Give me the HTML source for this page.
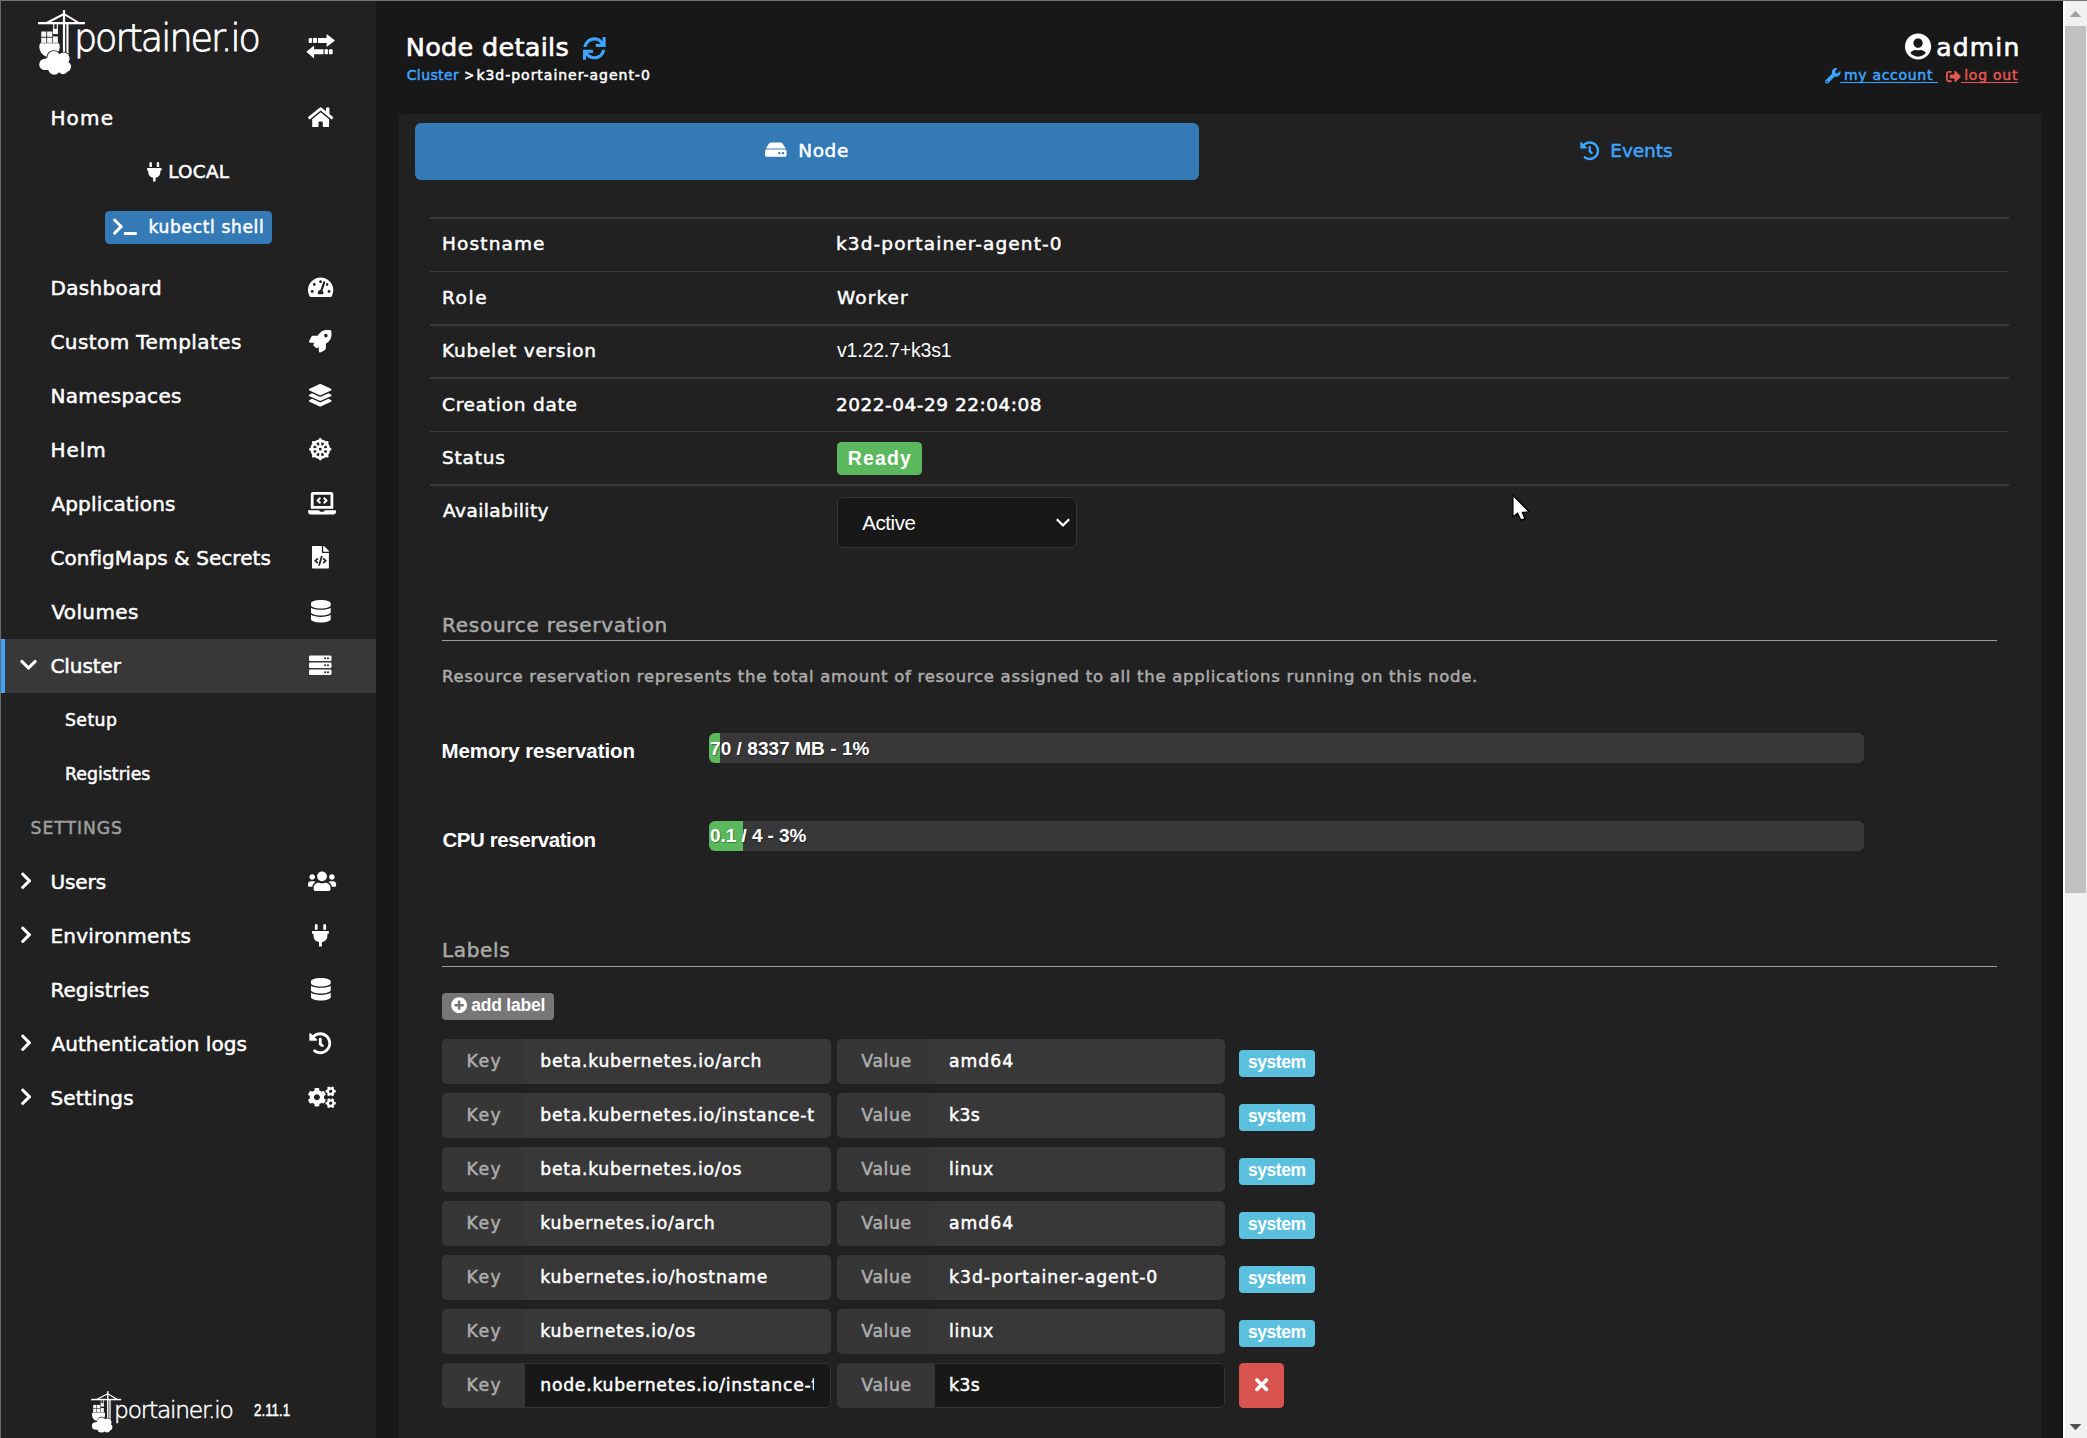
<!DOCTYPE html>
<html lang="en"><head><meta charset="utf-8"><title>Portainer - Node details</title>
<style>
html,body{margin:0;padding:0}
body{width:2087px;height:1438px;overflow:hidden;background:#181818;position:relative;font-family:"DejaVu Sans","Liberation Sans",sans-serif;-webkit-font-smoothing:antialiased}
svg{display:block;overflow:visible}
</style></head>
<body>
<div style="position:absolute;left:0px;top:0px;width:2087px;height:1438px;background:#181818;"></div>
<div style="position:absolute;left:1px;top:1px;width:375px;height:1437px;background:#212121;"></div>
<svg style="position:absolute;left:0;top:0" width="2087" height="1438" viewBox="0 0 2087 1438"><g transform="translate(0 0) scale(1)" fill="#fff" stroke="none"><rect x="62.9" y="10" width="2.2" height="42.5"/><rect x="66.4" y="23" width="2.1" height="31.5"/><rect x="38.1" y="22" width="46.8" height="2.3"/><path d="M64 14 L46.6 23 M64 14 L79 23" stroke="#fff" stroke-width="2" fill="none"/><rect x="53.1" y="24" width="1.1" height="5"/><rect x="56.8" y="24" width="1.1" height="5"/><rect x="52.9" y="28.8" width="5" height="5.3"/><g fill="#f4f4f4"><rect x="41.2" y="31.5" width="5.1" height="5.3"/><rect x="47.1" y="31.5" width="5.2" height="5.3"/><rect x="41.2" y="37.7" width="5.1" height="5.2"/><rect x="47.1" y="37.7" width="5.2" height="5.2"/><rect x="52.9" y="36.4" width="5" height="6.5"/></g><path d="M40.05 43.2 H59.05 A10.2 10.2 0 1 1 40.05 43.2 Z" /><g stroke="#212121" stroke-width="1.6"><circle cx="53.9" cy="57.6" r="6.6"/><circle cx="63.6" cy="58.6" r="6"/><circle cx="45" cy="64.4" r="5.7"/><circle cx="65.9" cy="66.6" r="5.2"/><circle cx="54.2" cy="68.8" r="6"/><circle cx="63" cy="69.4" r="4.8"/></g><circle cx="53.9" cy="57.6" r="6.6"/><circle cx="63.6" cy="58.6" r="6"/><circle cx="45" cy="64.4" r="5.7"/><circle cx="65.9" cy="66.6" r="5.2"/><circle cx="54.2" cy="68.8" r="6"/><circle cx="63" cy="69.4" r="4.8"/><rect x="46" y="58" width="20" height="12"/><text x="73.9" y="51.4" font-family="DejaVu Sans, Liberation Sans, sans-serif" font-weight="200" font-size="36.5" stroke="#fff" stroke-width="0.8" textLength="187" lengthAdjust="spacing">portainer.io</text></g></svg>
<svg style="position:absolute;left:0;top:0" width="2087" height="1438" viewBox="0 0 2087 1438"><g transform="translate(66.816 1384.736) scale(0.64)" fill="#fff" stroke="none"><rect x="62.9" y="10" width="2.2" height="42.5"/><rect x="66.4" y="23" width="2.1" height="31.5"/><rect x="38.1" y="22" width="46.8" height="2.3"/><path d="M64 14 L46.6 23 M64 14 L79 23" stroke="#fff" stroke-width="2" fill="none"/><rect x="53.1" y="24" width="1.1" height="5"/><rect x="56.8" y="24" width="1.1" height="5"/><rect x="52.9" y="28.8" width="5" height="5.3"/><g fill="#f4f4f4"><rect x="41.2" y="31.5" width="5.1" height="5.3"/><rect x="47.1" y="31.5" width="5.2" height="5.3"/><rect x="41.2" y="37.7" width="5.1" height="5.2"/><rect x="47.1" y="37.7" width="5.2" height="5.2"/><rect x="52.9" y="36.4" width="5" height="6.5"/></g><path d="M40.05 43.2 H59.05 A10.2 10.2 0 1 1 40.05 43.2 Z" /><g stroke="#212121" stroke-width="1.6"><circle cx="53.9" cy="57.6" r="6.6"/><circle cx="63.6" cy="58.6" r="6"/><circle cx="45" cy="64.4" r="5.7"/><circle cx="65.9" cy="66.6" r="5.2"/><circle cx="54.2" cy="68.8" r="6"/><circle cx="63" cy="69.4" r="4.8"/></g><circle cx="53.9" cy="57.6" r="6.6"/><circle cx="63.6" cy="58.6" r="6"/><circle cx="45" cy="64.4" r="5.7"/><circle cx="65.9" cy="66.6" r="5.2"/><circle cx="54.2" cy="68.8" r="6"/><circle cx="63" cy="69.4" r="4.8"/><rect x="46" y="58" width="20" height="12"/><text x="73.9" y="51.4" font-family="DejaVu Sans, Liberation Sans, sans-serif" font-weight="200" font-size="36.5" stroke="#fff" stroke-width="0.8" textLength="187" lengthAdjust="spacing">portainer.io</text></g></svg>
<svg style="position:absolute;left:300px;top:28px" width="42" height="36" viewBox="300 28 42 36" fill="#fff"><path d="M326.6 33.9 L335 40.45 L326.6 46.9 V42.9 H317.9 V37.9 H326.6 Z"/><rect x="312.9" y="37.9" width="4" height="5"/><rect x="308.7" y="37.9" width="3.3" height="5" rx="1"/><path d="M314.1 45.6 L306.3 51.85 L314.1 58.4 V54.2 H323.5 V49.2 H314.1 Z"/><rect x="324.6" y="49.2" width="3.3" height="5"/><rect x="328.9" y="49.2" width="3.8" height="5" rx="1"/></svg>
<div style="position:absolute;left:1px;top:638.75px;width:375px;height:54.3px;background:#383838;"></div>
<div style="position:absolute;left:1px;top:638.75px;width:4.3px;height:54.3px;background:#3ea5ff;"></div>
<span style="position:absolute;left:50.40px;top:108.01px;font:400 20px/1 'DejaVu Sans','Liberation Sans',sans-serif;color:#fff;white-space:pre;letter-spacing:1.181px;-webkit-text-stroke:0.5px;">Home</span>
<svg style="position:absolute;left:307.84px;top:105.95px;" width="25.31" height="22.50" viewBox="0 0 576 512" fill="#fff"><path d="M280.37 148.26L96 300.11V464a16 16 0 0 0 16 16l112.06-.29a16 16 0 0 0 15.92-16V368a16 16 0 0 1 16-16h64a16 16 0 0 1 16 16v95.64a16 16 0 0 0 16 16.05L464 480a16 16 0 0 0 16-16V300L295.67 148.26a12.19 12.19 0 0 0-15.3 0zM571.6 251.47L488 182.56V44.05a12 12 0 0 0-12-12h-56a12 12 0 0 0-12 12v72.61L318.47 43a48 48 0 0 0-61 0L4.34 251.47a12 12 0 0 0-1.6 16.9l25.5 31A12 12 0 0 0 45.15 301l235.22-193.74a12.19 12.19 0 0 1 15.3 0L530.9 301a12 12 0 0 0 16.9-1.6l25.5-31a12 12 0 0 0-1.7-16.93z"/></svg>
<span style="position:absolute;left:50.40px;top:278.00px;font:400 20px/1 'DejaVu Sans','Liberation Sans',sans-serif;color:#fff;white-space:pre;letter-spacing:0.349px;-webkit-text-stroke:0.5px;">Dashboard</span>
<svg style="position:absolute;left:307.84px;top:275.85px;" width="25.31" height="22.50" viewBox="0 0 576 512" fill="#fff"><path d="M288 32C128.94 32 0 160.94 0 320c0 52.8 14.25 102.26 39.06 144.8 5.61 9.62 16.3 15.2 27.44 15.2h443c11.14 0 21.83-5.58 27.44-15.2C561.75 422.26 576 372.8 576 320c0-159.06-128.94-288-288-288zm0 64c14.71 0 26.58 10.13 30.32 23.65-1.11 2.26-2.64 4.23-3.45 6.67l-9.22 27.67c-5.13 3.49-10.97 6.01-17.64 6.01-17.67 0-32-14.33-32-32S270.33 96 288 96zM96 384c-17.67 0-32-14.33-32-32s14.33-32 32-32 32 14.33 32 32-14.33 32-32 32zm48-160c-17.67 0-32-14.33-32-32s14.33-32 32-32 32 14.33 32 32-14.33 32-32 32zm246.77-72.41l-61.33 184C343.13 347.33 352 364.54 352 384c0 11.72-3.38 22.55-8.88 32H232.88c-5.5-9.45-8.88-20.28-8.88-32 0-33.94 26.5-61.43 59.9-63.59l61.34-184.01c4.17-12.56 17.73-19.45 30.36-15.17 12.57 4.19 19.35 17.79 15.17 30.36zm14.66 57.2l15.52-46.55c3.47-1.29 7.13-2.23 11.05-2.23 17.67 0 32 14.33 32 32s-14.33 32-32 32c-11.38-.01-20.89-6.28-26.57-15.22zM480 384c-17.67 0-32-14.33-32-32s14.33-32 32-32 32 14.33 32 32-14.33 32-32 32z"/></svg>
<span style="position:absolute;left:50.40px;top:332.00px;font:400 20px/1 'DejaVu Sans','Liberation Sans',sans-serif;color:#fff;white-space:pre;letter-spacing:0.424px;-webkit-text-stroke:0.5px;">Custom Templates</span>
<svg style="position:absolute;left:309.25px;top:329.85px;" width="22.50" height="22.50" viewBox="0 0 512 512" fill="#fff"><path d="M505.12019,19.09375c-1.18945-5.53125-6.65819-11-12.207-12.1875C460.716,0,435.507,0,410.40747,0,307.17523,0,245.26909,55.20312,199.05238,128H94.83772c-16.34763.01562-35.55658,11.875-42.88664,26.48438L2.51562,253.29688A28.4,28.4,0,0,0,0,264a24.00867,24.00867,0,0,0,24.00582,24H127.81618l-22.47457,22.46875c-11.36521,11.36133-12.99607,32.25781,0,45.25L156.24582,406.625c11.15623,11.1875,32.15619,13.15625,45.27726,0l22.47457-22.46875V488a24.00867,24.00867,0,0,0,24.00581,24,28.55934,28.55934,0,0,0,10.707-2.51562l98.72834-49.39063c14.62888-7.29687,26.50776-26.5,26.50776-42.85937V312.79688c72.59753-46.3125,128.03493-108.40626,128.03493-211.09376C512.07526,76.5,512.07526,51.29688,505.12019,19.09375ZM384.04033,168A40,40,0,1,1,424.05,128,40.02322,40.02322,0,0,1,384.04033,168Z"/></svg>
<span style="position:absolute;left:50.40px;top:386.00px;font:400 20px/1 'DejaVu Sans','Liberation Sans',sans-serif;color:#fff;white-space:pre;letter-spacing:0.336px;-webkit-text-stroke:0.5px;">Namespaces</span>
<svg style="position:absolute;left:309.25px;top:383.85px;" width="22.50" height="22.50" viewBox="0 0 512 512" fill="#fff"><path d="M12.41 148.02l232.94 105.67c6.8 3.09 14.49 3.09 21.29 0l232.94-105.67c16.55-7.51 16.55-32.52 0-40.03L266.65 2.31a25.607 25.607 0 0 0-21.29 0L12.41 107.98c-16.55 7.51-16.55 32.53 0 40.04zm487.18 88.28l-58.09-26.33-161.64 73.27c-7.56 3.43-15.59 5.17-23.86 5.17s-16.29-1.74-23.86-5.17L70.51 209.97l-58.1 26.33c-16.55 7.5-16.55 32.5 0 40l232.94 105.59c6.8 3.08 14.49 3.08 21.29 0L499.59 276.3c16.55-7.5 16.55-32.5 0-40zm0 127.8l-57.87-26.23-161.86 73.37c-7.56 3.43-15.59 5.17-23.86 5.17s-16.29-1.74-23.86-5.17L70.29 337.87 12.41 364.1c-16.55 7.5-16.55 32.5 0 40l232.94 105.59c6.8 3.08 14.49 3.08 21.29 0L499.59 404.1c16.55-7.5 16.55-32.5 0-40z"/></svg>
<span style="position:absolute;left:50.40px;top:440.00px;font:400 20px/1 'DejaVu Sans','Liberation Sans',sans-serif;color:#fff;white-space:pre;letter-spacing:1.000px;-webkit-text-stroke:0.5px;">Helm</span>
<svg style="position:absolute;left:309.25px;top:437.85px;" width="22.50" height="22.50" viewBox="0 0 512 512" fill="#fff"><path d="m337.8 205.7 48.6-42.5c13.8 19.3 23.4 41.9 27.4 66.2l-64.4 4.3c-2.4-10.1-6.4-19.5-11.6-28m140.1 19.5c-5.3-38.8-20.6-74.5-43.2-104.3l.8-.7C449 108.4 449.7 87.6 437 75s-33.4-12-45.2 1.5l-.7.8c-29.8-22.6-65.5-37.9-104.3-43.2l.1-1.1c1.2-17.9-13-33-30.9-33s-32.1 15.2-30.9 33l.1 1.1c-38.8 5.3-74.5 20.6-104.3 43.2l-.7-.8C108.4 63 87.6 62.3 75 75s-12 33.4 1.5 45.2l.8.7c-22.6 29.8-37.9 65.5-43.2 104.3l-1.1-.1c-17.9-1.2-33 13-33 30.9s15.2 32.1 33 30.9l1.1-.1c5.3 38.8 20.6 74.5 43.2 104.3l-.8.7C63 403.6 62.3 424.4 75 437s33.4 12 45.2-1.5l.7-.8c29.8 22.6 65.5 37.9 104.3 43.2l-.1 1.1c-1.2 17.9 13 33 30.9 33s32.1-15.2 30.9-33l-.1-1.1c38.8-5.3 74.5-20.6 104.3-43.2l.7.8c11.8 13.5 32.5 14.2 45.2 1.5s12-33.4-1.5-45.2l-.8-.7c22.6-29.8 37.9-65.5 43.2-104.3l1.1.1c17.9 1.2 33-13 33-30.9s-15.2-32.1-33-30.9zm-314.7-99.6c19.3-13.8 41.9-23.4 66.2-27.5l4.3 64.4c-10 2.4-19.5 6.4-28 11.6l-42.5-48.6zm-65 103.8c4.1-24.4 13.7-46.9 27.5-66.2l48.6 42.5c-5.3 8.5-9.2 18-11.6 28l-64.4-4.3zm27.5 119.4a159.5 159.5 0 0 1-27.5-66.2l64.4-4.3c2.4 10.1 6.4 19.5 11.6 28l-48.6 42.5zm103.8 65c-24.4-4.1-46.9-13.7-66.2-27.4l42.5-48.6c8.5 5.3 18 9.2 28 11.6zm119.4-27.4c-19.3 13.8-41.9 23.4-66.2 27.4l-4.3-64.4c10-2.4 19.5-6.4 28-11.6zm65-103.8c-4.1 24.4-13.7 46.9-27.4 66.2l-48.6-42.5c5.3-8.6 9.2-18 11.6-28zm-65-156.9-42.5 48.6c-8.6-5.3-18-9.2-28-11.6l4.3-64.4c24.4 4.1 46.9 13.7 66.2 27.5zM256 224a32 32 0 1 1 0 64 32 32 0 1 1 0-64"/></svg>
<span style="position:absolute;left:51.40px;top:494.00px;font:400 20px/1 'DejaVu Sans','Liberation Sans',sans-serif;color:#fff;white-space:pre;letter-spacing:0.168px;-webkit-text-stroke:0.5px;">Applications</span>
<svg style="position:absolute;left:307.54px;top:491.85px;" width="28.12" height="22.50" viewBox="0 0 640 512" fill="#fff"><path d="M255.03 261.65c6.25 6.25 16.38 6.25 22.63 0l11.31-11.31c6.25-6.25 6.25-16.38 0-22.63L253.25 192l35.71-35.72c6.25-6.25 6.25-16.38 0-22.63l-11.31-11.31c-6.25-6.25-16.38-6.25-22.63 0l-58.34 58.34c-6.25 6.25-6.25 16.38 0 22.63l58.35 58.34zm96.01-11.3l11.31 11.31c6.25 6.25 16.38 6.25 22.63 0l58.34-58.34c6.25-6.25 6.25-16.38 0-22.63l-58.34-58.34c-6.25-6.25-16.38-6.25-22.63 0l-11.31 11.31c-6.25 6.25-6.25 16.38 0 22.63L386.75 192l-35.71 35.72c-6.25 6.25-6.25 16.38 0 22.63zM624 416H381.54c-.74 19.81-14.71 32-32.74 32H288c-18.69 0-33.02-17.47-32.77-32H16c-8.8 0-16 7.2-16 16v16c0 35.2 28.8 64 64 64h512c35.2 0 64-28.8 64-64v-16c0-8.8-7.2-16-16-16zM576 48c0-26.4-21.6-48-48-48H112C85.6 0 64 21.6 64 48v336h512V48zm-64 272H128V64h384v256z"/></svg>
<span style="position:absolute;left:50.40px;top:548.00px;font:400 20px/1 'DejaVu Sans','Liberation Sans',sans-serif;color:#fff;white-space:pre;letter-spacing:0.051px;-webkit-text-stroke:0.5px;">ConfigMaps &amp; Secrets</span>
<svg style="position:absolute;left:312.06px;top:545.85px;" width="16.88" height="22.50" viewBox="0 0 384 512" fill="#fff"><path d="M384 121.941V128H256V0h6.059c6.365 0 12.47 2.529 16.971 7.029l97.941 97.941A24.005 24.005 0 0 1 384 121.941zM248 160c-13.2 0-24-10.8-24-24V0H24C10.745 0 0 10.745 0 24v464c0 13.255 10.745 24 24 24h336c13.255 0 24-10.745 24-24V160H248zM123.206 400.505a5.4 5.4 0 0 1-7.633.246l-64.866-60.812a5.4 5.4 0 0 1 0-7.879l64.866-60.812a5.4 5.4 0 0 1 7.633.246l19.579 20.885a5.4 5.4 0 0 1-.372 7.747L101.65 336l40.763 35.874a5.4 5.4 0 0 1 .372 7.747l-19.579 20.884zm51.295 50.479l-27.453-7.97a5.402 5.402 0 0 1-3.681-6.692l61.44-211.626a5.402 5.402 0 0 1 6.692-3.681l27.452 7.97a5.4 5.4 0 0 1 3.68 6.692l-61.44 211.626a5.397 5.397 0 0 1-6.69 3.681zm160.792-111.045l-64.866 60.812a5.4 5.4 0 0 1-7.633-.246l-19.58-20.885a5.4 5.4 0 0 1 .372-7.747L284.35 336l-40.763-35.874a5.4 5.4 0 0 1-.372-7.747l19.58-20.885a5.4 5.4 0 0 1 7.633-.246l64.866 60.812a5.4 5.4 0 0 1-.001 7.879z"/></svg>
<span style="position:absolute;left:51.40px;top:602.00px;font:400 20px/1 'DejaVu Sans','Liberation Sans',sans-serif;color:#fff;white-space:pre;letter-spacing:0.353px;-webkit-text-stroke:0.5px;">Volumes</span>
<svg style="position:absolute;left:310.66px;top:599.85px;" width="19.69" height="22.50" viewBox="0 0 448 512" fill="#fff"><path d="M448 73.143v45.714C448 159.143 347.667 192 224 192S0 159.143 0 118.857V73.143C0 32.857 100.333 0 224 0s224 32.857 224 73.143zM448 176v102.857C448 319.143 347.667 352 224 352S0 319.143 0 278.857V176c48.125 33.143 136.208 48.572 224 48.572S399.874 209.143 448 176zm0 160v102.857C448 479.143 347.667 512 224 512S0 479.143 0 438.857V336c48.125 33.143 136.208 48.572 224 48.572S399.874 369.143 448 336z"/></svg>
<span style="position:absolute;left:50.40px;top:656.00px;font:400 20px/1 'DejaVu Sans','Liberation Sans',sans-serif;color:#fff;white-space:pre;letter-spacing:-0.061px;-webkit-text-stroke:0.5px;">Cluster</span>
<svg style="position:absolute;left:309.25px;top:653.85px;" width="22.50" height="22.50" viewBox="0 0 512 512" fill="#fff"><path d="M480 160H32c-17.673 0-32-14.327-32-32V64c0-17.673 14.327-32 32-32h448c17.673 0 32 14.327 32 32v64c0 17.673-14.327 32-32 32zm-48-88c-13.255 0-24 10.745-24 24s10.745 24 24 24 24-10.745 24-24-10.745-24-24-24zm-64 0c-13.255 0-24 10.745-24 24s10.745 24 24 24 24-10.745 24-24-10.745-24-24-24zm112 248H32c-17.673 0-32-14.327-32-32v-64c0-17.673 14.327-32 32-32h448c17.673 0 32 14.327 32 32v64c0 17.673-14.327 32-32 32zm-48-88c-13.255 0-24 10.745-24 24s10.745 24 24 24 24-10.745 24-24-10.745-24-24-24zm-64 0c-13.255 0-24 10.745-24 24s10.745 24 24 24 24-10.745 24-24-10.745-24-24-24zm112 248H32c-17.673 0-32-14.327-32-32v-64c0-17.673 14.327-32 32-32h448c17.673 0 32 14.327 32 32v64c0 17.673-14.327 32-32 32zm-48-88c-13.255 0-24 10.745-24 24s10.745 24 24 24 24-10.745 24-24-10.745-24-24-24zm-64 0c-13.255 0-24 10.745-24 24s10.745 24 24 24 24-10.745 24-24-10.745-24-24-24z"/></svg>
<svg style="position:absolute;left:19.90px;top:655.25px;" width="17.06" height="19.50" viewBox="0 0 448 512" fill="#fff"><path d="M207.029 381.476L12.686 187.132c-9.373-9.373-9.373-24.569 0-33.941l22.667-22.667c9.357-9.357 24.522-9.375 33.901-.04L224 284.505l154.745-154.021c9.379-9.335 24.544-9.317 33.901.04l22.667 22.667c9.373 9.373 9.373 24.569 0 33.941L240.971 381.476c-9.373 9.372-24.569 9.372-33.942 0z"/></svg>
<span style="position:absolute;left:50.40px;top:872.00px;font:400 20px/1 'DejaVu Sans','Liberation Sans',sans-serif;color:#fff;white-space:pre;letter-spacing:-0.071px;-webkit-text-stroke:0.5px;">Users</span>
<svg style="position:absolute;left:307.54px;top:869.85px;" width="28.12" height="22.50" viewBox="0 0 640 512" fill="#fff"><path d="M96 224c35.3 0 64-28.7 64-64s-28.7-64-64-64-64 28.7-64 64 28.7 64 64 64zm448 0c35.3 0 64-28.7 64-64s-28.7-64-64-64-64 28.7-64 64 28.7 64 64 64zm32 32h-64c-17.6 0-33.5 7.1-45.1 18.6 40.3 22.1 68.9 62 75.1 109.4h66c17.7 0 32-14.3 32-32v-32c0-35.3-28.7-64-64-64zm-256 0c61.9 0 112-50.1 112-112S381.9 32 320 32 208 82.1 208 144s50.1 112 112 112zm76.8 32h-8.3c-20.8 10-43.9 16-68.5 16s-47.6-6-68.5-16h-8.3C179.6 288 128 339.6 128 403.2V432c0 26.5 21.5 48 48 48h288c26.5 0 48-21.5 48-48v-28.8c0-63.6-51.6-115.2-115.2-115.2zm-223.700-13.400C161.500 263.100 145.600 256 128 256H64c-35.300 0-64 28.700-64 64v32c0 17.700 14.300 32 32 32h65.900c6.300-47.400 34.900-87.300 75.200-109.400z"/></svg>
<svg style="position:absolute;left:19.75px;top:871.25px;" width="12.19" height="19.50" viewBox="0 0 320 512" fill="#fff"><path d="M285.476 272.971L91.132 467.314c-9.373 9.373-24.569 9.373-33.941 0l-22.667-22.667c-9.357-9.357-9.375-24.522-.04-33.901L188.505 256 34.484 101.255c-9.335-9.379-9.317-24.544.04-33.901l22.667-22.667c9.373-9.373 24.569-9.373 33.941 0L285.475 239.03c9.373 9.372 9.373 24.568.001 33.941z"/></svg>
<span style="position:absolute;left:50.40px;top:926.00px;font:400 20px/1 'DejaVu Sans','Liberation Sans',sans-serif;color:#fff;white-space:pre;letter-spacing:0.218px;-webkit-text-stroke:0.5px;">Environments</span>
<svg style="position:absolute;left:312.06px;top:923.85px;" width="16.88" height="22.50" viewBox="0 0 384 512" fill="#fff"><path d="M320,32a32,32,0,0,0-64,0v96h64Zm48,128H16A16,16,0,0,0,0,176v32a16,16,0,0,0,16,16H32v32A160.07,160.07,0,0,0,160,412.8V512h64V412.8A160.07,160.07,0,0,0,352,256V224h16a16,16,0,0,0,16-16V176A16,16,0,0,0,368,160ZM128,32a32,32,0,0,0-64,0v96h64Z"/></svg>
<svg style="position:absolute;left:19.75px;top:925.25px;" width="12.19" height="19.50" viewBox="0 0 320 512" fill="#fff"><path d="M285.476 272.971L91.132 467.314c-9.373 9.373-24.569 9.373-33.941 0l-22.667-22.667c-9.357-9.357-9.375-24.522-.04-33.901L188.505 256 34.484 101.255c-9.335-9.379-9.317-24.544.04-33.901l22.667-22.667c9.373-9.373 24.569-9.373 33.941 0L285.475 239.03c9.373 9.372 9.373 24.568.001 33.941z"/></svg>
<span style="position:absolute;left:50.40px;top:980.00px;font:400 20px/1 'DejaVu Sans','Liberation Sans',sans-serif;color:#fff;white-space:pre;letter-spacing:0.078px;-webkit-text-stroke:0.5px;">Registries</span>
<svg style="position:absolute;left:310.66px;top:977.85px;" width="19.69" height="22.50" viewBox="0 0 448 512" fill="#fff"><path d="M448 73.143v45.714C448 159.143 347.667 192 224 192S0 159.143 0 118.857V73.143C0 32.857 100.333 0 224 0s224 32.857 224 73.143zM448 176v102.857C448 319.143 347.667 352 224 352S0 319.143 0 278.857V176c48.125 33.143 136.208 48.572 224 48.572S399.874 209.143 448 176zm0 160v102.857C448 479.143 347.667 512 224 512S0 479.143 0 438.857V336c48.125 33.143 136.208 48.572 224 48.572S399.874 369.143 448 336z"/></svg>
<span style="position:absolute;left:51.40px;top:1034.00px;font:400 20px/1 'DejaVu Sans','Liberation Sans',sans-serif;color:#fff;white-space:pre;letter-spacing:0.085px;-webkit-text-stroke:0.5px;">Authentication logs</span>
<svg style="position:absolute;left:309.25px;top:1031.85px;" width="22.50" height="22.50" viewBox="0 0 512 512" fill="#fff"><path d="M504 255.531c.253 136.64-111.18 248.372-247.82 248.468-59.015.042-113.223-20.53-155.822-54.911-11.077-8.94-11.905-25.541-1.839-35.607l11.267-11.267c8.609-8.609 22.353-9.551 31.891-1.984C173.062 425.135 212.781 440 256 440c101.705 0 184-82.311 184-184 0-101.705-82.311-184-184-184-48.814 0-93.149 18.969-126.068 49.932l50.754 50.754c10.08 10.08 2.941 27.314-11.313 27.314H24c-8.837 0-16-7.163-16-16V38.627c0-14.254 17.234-21.393 27.314-11.314l49.372 49.372C129.209 34.136 189.552 8 256 8c136.81 0 247.747 110.78 248 247.531zm-180.912 78.784l9.823-12.63c8.138-10.463 6.253-25.542-4.21-33.679L288 256.349V152c0-13.255-10.745-24-24-24h-16c-13.255 0-24 10.745-24 24v135.651l65.409 50.874c10.463 8.137 25.541 6.253 33.679-4.21z"/></svg>
<svg style="position:absolute;left:19.75px;top:1033.25px;" width="12.19" height="19.50" viewBox="0 0 320 512" fill="#fff"><path d="M285.476 272.971L91.132 467.314c-9.373 9.373-24.569 9.373-33.941 0l-22.667-22.667c-9.357-9.357-9.375-24.522-.04-33.901L188.505 256 34.484 101.255c-9.335-9.379-9.317-24.544.04-33.901l22.667-22.667c9.373-9.373 24.569-9.373 33.941 0L285.475 239.03c9.373 9.372 9.373 24.568.001 33.941z"/></svg>
<span style="position:absolute;left:50.40px;top:1088.00px;font:400 20px/1 'DejaVu Sans','Liberation Sans',sans-serif;color:#fff;white-space:pre;letter-spacing:0.170px;-webkit-text-stroke:0.5px;">Settings</span>
<svg style="position:absolute;left:307.84px;top:1085.85px" width="28.12" height="22.5" viewBox="0 0 640 512" fill="#fff"><path transform="translate(203 256) scale(0.85) translate(-256 -256)" d="M487.4 315.7l-42.6-24.6c4.3-23.2 4.3-47 0-70.2l42.6-24.6c4.9-2.8 7.1-8.6 5.5-14-11.1-35.6-30-67.8-54.7-94.6-3.8-4.1-10-5.1-14.8-2.3L380.8 110c-17.9-15.4-38.5-27.3-60.8-35.1V25.800c0-5.600-3.900-10.500-9.400-11.700-36.700-8.200-74.300-7.800-109.200 0-5.500 1.200-9.400 6.100-9.400 11.700V75c-22.200 7.900-42.800 19.800-60.800 35.100L88.700 85.500c-4.900-2.800-11-1.900-14.800 2.300-24.700 26.700-43.600 58.900-54.700 94.600-1.700 5.400.6 11.200 5.500 14L67.300 221c-4.300 23.200-4.300 47 0 70.200l-42.600 24.600c-4.900 2.800-7.100 8.600-5.500 14 11.100 35.600 30 67.800 54.700 94.600 3.800 4.100 10 5.100 14.800 2.300l42.600-24.600c17.900 15.400 38.500 27.300 60.800 35.100v49.200c0 5.600 3.900 10.500 9.400 11.700 36.700 8.200 74.300 7.800 109.200 0 5.500-1.200 9.400-6.100 9.400-11.700v-49.200c22.200-7.900 42.800-19.800 60.800-35.100l42.600 24.600c4.900 2.800 11 1.900 14.800-2.300 24.700-26.700 43.600-58.900 54.700-94.600 1.500-5.500-.7-11.300-5.600-14.100zM256 336c-44.100 0-80-35.900-80-80s35.900-80 80-80 80 35.900 80 80-35.900 80-80 80z"/><path transform="translate(516 120) scale(0.47) rotate(30) translate(-256 -256)" d="M487.4 315.7l-42.6-24.6c4.3-23.2 4.3-47 0-70.2l42.6-24.6c4.9-2.8 7.1-8.6 5.5-14-11.1-35.6-30-67.8-54.7-94.6-3.8-4.1-10-5.1-14.8-2.3L380.8 110c-17.9-15.4-38.5-27.3-60.8-35.1V25.800c0-5.600-3.900-10.500-9.400-11.700-36.700-8.200-74.300-7.800-109.200 0-5.500 1.200-9.400 6.100-9.400 11.700V75c-22.200 7.900-42.800 19.800-60.800 35.100L88.700 85.500c-4.900-2.800-11-1.900-14.800 2.300-24.700 26.700-43.600 58.900-54.700 94.600-1.700 5.400.6 11.200 5.500 14L67.300 221c-4.300 23.200-4.300 47 0 70.200l-42.600 24.600c-4.900 2.800-7.100 8.600-5.500 14 11.100 35.600 30 67.800 54.700 94.600 3.800 4.100 10 5.100 14.800 2.300l42.600-24.600c17.900 15.400 38.500 27.300 60.800 35.100v49.200c0 5.600 3.900 10.500 9.400 11.700 36.700 8.200 74.300 7.800 109.200 0 5.500-1.200 9.400-6.100 9.400-11.700v-49.200c22.200-7.900 42.800-19.800 60.800-35.100l42.600 24.600c4.900 2.800 11 1.900 14.800-2.300 24.700-26.700 43.600-58.900 54.700-94.600 1.500-5.500-.7-11.300-5.600-14.100zM256 336c-44.100 0-80-35.900-80-80s35.900-80 80-80 80 35.900 80 80-35.900 80-80 80z"/><path transform="translate(516 392) scale(0.47) rotate(30) translate(-256 -256)" d="M487.4 315.7l-42.6-24.6c4.3-23.2 4.3-47 0-70.2l42.6-24.6c4.9-2.8 7.1-8.6 5.5-14-11.1-35.6-30-67.8-54.7-94.6-3.8-4.1-10-5.1-14.8-2.3L380.8 110c-17.9-15.4-38.5-27.3-60.8-35.1V25.800c0-5.600-3.900-10.500-9.400-11.700-36.700-8.200-74.300-7.800-109.200 0-5.500 1.200-9.400 6.100-9.400 11.700V75c-22.200 7.900-42.800 19.800-60.800 35.100L88.700 85.500c-4.900-2.800-11-1.900-14.800 2.300-24.700 26.700-43.600 58.900-54.700 94.600-1.700 5.400.6 11.200 5.500 14L67.300 221c-4.300 23.200-4.300 47 0 70.200l-42.600 24.600c-4.900 2.800-7.100 8.600-5.500 14 11.100 35.600 30 67.800 54.700 94.600 3.800 4.100 10 5.100 14.800 2.300l42.600-24.600c17.900 15.400 38.500 27.300 60.800 35.100v49.200c0 5.600 3.900 10.500 9.400 11.700 36.700 8.200 74.300 7.800 109.200 0 5.500-1.200 9.400-6.100 9.400-11.700v-49.200c22.200-7.900 42.800-19.800 60.800-35.100l42.600 24.600c4.900 2.800 11 1.900 14.800-2.300 24.700-26.700 43.600-58.900 54.700-94.600 1.500-5.500-.7-11.300-5.600-14.100zM256 336c-44.100 0-80-35.900-80-80s35.900-80 80-80 80 35.900 80 80-35.900 80-80 80z"/></svg>
<svg style="position:absolute;left:19.75px;top:1087.25px;" width="12.19" height="19.50" viewBox="0 0 320 512" fill="#fff"><path d="M285.476 272.971L91.132 467.314c-9.373 9.373-24.569 9.373-33.941 0l-22.667-22.667c-9.357-9.357-9.375-24.522-.04-33.901L188.505 256 34.484 101.255c-9.335-9.379-9.317-24.544.04-33.901l22.667-22.667c9.373-9.373 24.569-9.373 33.941 0L285.475 239.03c9.373 9.372 9.373 24.568.001 33.941z"/></svg>
<svg style="position:absolute;left:146.90px;top:161.50px;" width="14.62" height="19.50" viewBox="0 0 384 512" fill="#fff"><path d="M320,32a32,32,0,0,0-64,0v96h64Zm48,128H16A16,16,0,0,0,0,176v32a16,16,0,0,0,16,16H32v32A160.07,160.07,0,0,0,160,412.8V512h64V412.8A160.07,160.07,0,0,0,352,256V224h16a16,16,0,0,0,16-16V176A16,16,0,0,0,368,160ZM128,32a32,32,0,0,0-64,0v96h64Z"/></svg>
<span style="position:absolute;left:168.20px;top:163.01px;font:400 18.4px/1 'DejaVu Sans','Liberation Sans',sans-serif;color:#fff;white-space:pre;letter-spacing:0.278px;-webkit-text-stroke:0.5px;">LOCAL</span>
<div style="position:absolute;left:105px;top:210.8px;width:167.1px;height:33.2px;background:#337ab7;border-radius:4.5px;"></div>
<svg style="position:absolute;left:113.20px;top:216.70px;" width="24.00" height="19.20" viewBox="0 0 640 512" fill="#fff"><path d="M257.981 272.971L63.638 467.314c-9.373 9.373-24.569 9.373-33.941 0L7.029 444.647c-9.357-9.357-9.375-24.522-.04-33.901L161.011 256 6.99 101.255c-9.335-9.379-9.317-24.544.04-33.901l22.667-22.667c9.373-9.373 24.569-9.373 33.941 0L257.981 239.03c9.373 9.372 9.373 24.568 0 33.941zM640 456v-32c0-13.255-10.745-24-24-24H312c-13.255 0-24 10.745-24 24v32c0 13.255 10.745 24 24 24h304c13.255 0 24-10.745 24-24z"/></svg>
<span style="position:absolute;left:148.60px;top:219.01px;font:400 17px/1 'DejaVu Sans','Liberation Sans',sans-serif;color:#fff;white-space:pre;letter-spacing:0.675px;-webkit-text-stroke:0.5px;">kubectl shell</span>
<span style="position:absolute;left:65.00px;top:712.01px;font:400 17.3px/1 'DejaVu Sans','Liberation Sans',sans-serif;color:#fff;white-space:pre;letter-spacing:0.392px;-webkit-text-stroke:0.5px;">Setup</span>
<span style="position:absolute;left:65.00px;top:766.01px;font:400 17.3px/1 'DejaVu Sans','Liberation Sans',sans-serif;color:#fff;white-space:pre;letter-spacing:0.039px;-webkit-text-stroke:0.5px;">Registries</span>
<span style="position:absolute;left:30.60px;top:820.00px;font:400 17.2px/1 'DejaVu Sans','Liberation Sans',sans-serif;color:#9e9e9e;white-space:pre;letter-spacing:0.970px;-webkit-text-stroke:0.5px;">SETTINGS</span>
<span style="position:absolute;left:253.60px;top:1403.00px;font:400 16.8px/1 'Liberation Sans',sans-serif;color:#fff;white-space:pre;transform:scaleX(0.7964);transform-origin:0.00px 50%;-webkit-text-stroke:0.5px;">2.11.1</span>
<span style="position:absolute;left:405.80px;top:35.01px;font:400 25.5px/1 'DejaVu Sans','Liberation Sans',sans-serif;color:#fff;white-space:pre;letter-spacing:0.298px;-webkit-text-stroke:0.65px;">Node details</span>
<svg style="position:absolute;left:583.20px;top:36.55px;" width="22.70" height="22.70" viewBox="0 0 512 512" fill="#3ea5ff"><path d="M440.65 12.57l4 82.77A247.16 247.16 0 0 0 255.83 8C134.73 8 33.91 94.92 12.29 209.82A12 12 0 0 0 24.09 224h49.05a12 12 0 0 0 11.67-9.26 175.91 175.91 0 0 1 317-56.94l-101.46-4.86a12 12 0 0 0-12.57 12v47.41a12 12 0 0 0 12 12H500a12 12 0 0 0 12-12V12a12 12 0 0 0-12-12h-47.37a12 12 0 0 0-11.98 12.57zM255.83 432a175.61 175.61 0 0 1-146-77.8l101.8 4.87a12 12 0 0 0 12.57-12v-47.4a12 12 0 0 0-12-12H12a12 12 0 0 0-12 12V500a12 12 0 0 0 12 12h47.35a12 12 0 0 0 12-12.6l-4.15-82.57A247.17 247.17 0 0 0 255.83 504c121.11 0 221.93-86.92 243.55-201.82a12 12 0 0 0-11.8-14.18h-49.05a12 12 0 0 0-11.67 9.26A175.86 175.86 0 0 1 255.83 432z"/></svg>
<span style="position:absolute;left:406.70px;top:68.00px;font:400 14px/1 'DejaVu Sans','Liberation Sans',sans-serif;color:#3ea5ff;white-space:pre;letter-spacing:0.394px;-webkit-text-stroke:0.5px;">Cluster</span>
<span style="position:absolute;left:463.60px;top:68.00px;font:400 14px/1 'DejaVu Sans','Liberation Sans',sans-serif;color:#fff;white-space:pre;transform:scaleX(0.8400);transform-origin:1.00px 50%;-webkit-text-stroke:0.5px;">&gt;</span>
<span style="position:absolute;left:476.40px;top:68.00px;font:400 14px/1 'DejaVu Sans','Liberation Sans',sans-serif;color:#fff;white-space:pre;letter-spacing:0.974px;-webkit-text-stroke:0.5px;">k3d-portainer-agent-0</span>
<svg style="position:absolute;left:1904.52px;top:32.55px;" width="26.16" height="27.00" viewBox="0 0 496 512" fill="#fff"><path d="M248 8C111 8 0 119 0 256s111 248 248 248 248-111 248-248S385 8 248 8zm0 96c48.6 0 88 39.4 88 88s-39.4 88-88 88-88-39.4-88-88 39.4-88 88-88zm0 344c-58.7 0-111.3-26.6-146.5-68.2 18.8-35.4 55.6-59.8 98.5-59.8 2.4 0 4.8.4 7.1 1.1 13 4.2 26.6 6.9 40.9 6.900 14.3 0 28-2.700 40.900-6.900 2.300-.7 4.700-1.100 7.100-1.100 42.900 0 79.700 24.400 98.500 59.800C359.300 421.400 306.700 448 248 448z"/></svg>
<span style="position:absolute;left:1936.30px;top:35.00px;font:400 25px/1 'DejaVu Sans','Liberation Sans',sans-serif;color:#fff;white-space:pre;letter-spacing:1.153px;-webkit-text-stroke:0.65px;">admin</span>
<svg style="position:absolute;left:1824.60px;top:67.60px;" width="15.50" height="15.50" viewBox="0 0 512 512" fill="#3ea5ff"><path d="M507.73 109.1c-2.24-9.03-13.54-12.09-20.12-5.51l-74.36 74.36-67.88-11.31-11.31-67.88 74.36-74.36c6.62-6.62 3.43-17.9-5.66-20.16-47.38-11.74-99.55.91-136.58 37.93-39.64 39.64-50.55 97.1-34.05 147.2L18.74 402.76c-24.99 24.99-24.99 65.51 0 90.5 24.99 24.99 65.51 24.99 90.5 0l213.21-213.21c50.12 16.71 107.47 5.68 147.37-34.22 37.07-37.07 49.7-89.32 37.91-136.73zM64 472c-13.25 0-24-10.75-24-24 0-13.26 10.75-24 24-24s24 10.74 24 24c0 13.25-10.75 24-24 24z"/></svg>
<span style="position:absolute;left:1844.00px;top:68.01px;font:400 14px/1 'DejaVu Sans','Liberation Sans',sans-serif;color:#3ea5ff;white-space:pre;letter-spacing:0.694px;-webkit-text-stroke:0.5px;">my account</span>
<div style="position:absolute;left:1840.3px;top:81.5px;width:97.5px;height:1.3px;background:#3ea5ff;"></div>
<svg style="position:absolute;left:1945.50px;top:68.50px;" width="15.00" height="15.00" viewBox="0 0 512 512" fill="#e0574f"><path d="M497 273L329 441c-15 15-41 4.5-41-17v-96H152c-13.3 0-24-10.7-24-24v-96c0-13.3 10.7-24 24-24h136V88c0-21.4 25.9-32 41-17l168 168c9.3 9.4 9.3 24.6 0 34zM192 436v-40c0-6.600-5.400-12-12-12H96c-17.700 0-32-14.300-32-32V160c0-17.700 14.300-32 32-32h84c6.600 0 12-5.400 12-12V76c0-6.600-5.400-12-12-12H96c-53 0-96 43-96 96v192c0 53 43 96 96 96h84c6.600 0 12-5.400 12-12z"/></svg>
<span style="position:absolute;left:1964.20px;top:68.01px;font:400 14px/1 'DejaVu Sans','Liberation Sans',sans-serif;color:#e0574f;white-space:pre;letter-spacing:0.745px;-webkit-text-stroke:0.5px;">log out</span>
<div style="position:absolute;left:1960.5px;top:81.5px;width:57.4px;height:1.3px;background:#e0574f;"></div>
<div style="position:absolute;left:399px;top:114px;width:1642px;height:1330px;background:#212121;border-radius:2.5px;"></div>
<div style="position:absolute;left:415px;top:123px;width:784px;height:57px;background:#337ab7;border-radius:6px;"></div>
<svg style="position:absolute;left:764.80px;top:140.30px;" width="21.60" height="19.20" viewBox="0 0 576 512" fill="#fff"><path d="M576 304v96c0 26.51-21.49 48-48 48H48c-26.51 0-48-21.49-48-48v-96c0-26.51 21.49-48 48-48h480c26.51 0 48 21.49 48 48zm-48-80a79.557 79.557 0 0 1 30.777 6.165L462.25 85.374A48.003 48.003 0 0 0 422.311 64H153.689a48 48 0 0 0-39.938 21.374L17.223 230.165A79.557 79.557 0 0 1 48 224h480zm-48 96c-17.673 0-32 14.327-32 32s14.327 32 32 32 32-14.327 32-32-14.327-32-32-32zm-96 0c-17.673 0-32 14.327-32 32s14.327 32 32 32 32-14.327 32-32-14.327-32-32-32z"/></svg>
<span style="position:absolute;left:798.20px;top:142.00px;font:400 18.5px/1 'DejaVu Sans','Liberation Sans',sans-serif;color:#fff;white-space:pre;letter-spacing:0.633px;-webkit-text-stroke:0.5px;">Node</span>
<svg style="position:absolute;left:1579.65px;top:140.50px;" width="19.50" height="19.50" viewBox="0 0 512 512" fill="#3ea5ff"><path d="M504 255.531c.253 136.64-111.18 248.372-247.82 248.468-59.015.042-113.223-20.53-155.822-54.911-11.077-8.94-11.905-25.541-1.839-35.607l11.267-11.267c8.609-8.609 22.353-9.551 31.891-1.984C173.062 425.135 212.781 440 256 440c101.705 0 184-82.311 184-184 0-101.705-82.311-184-184-184-48.814 0-93.149 18.969-126.068 49.932l50.754 50.754c10.08 10.08 2.941 27.314-11.313 27.314H24c-8.837 0-16-7.163-16-16V38.627c0-14.254 17.234-21.393 27.314-11.314l49.372 49.372C129.209 34.136 189.552 8 256 8c136.81 0 247.747 110.78 248 247.531zm-180.912 78.784l9.823-12.63c8.138-10.463 6.253-25.542-4.21-33.679L288 256.349V152c0-13.255-10.745-24-24-24h-16c-13.255 0-24 10.745-24 24v135.651l65.409 50.874c10.463 8.137 25.541 6.253 33.679-4.21z"/></svg>
<span style="position:absolute;left:1610.30px;top:142.00px;font:400 18.5px/1 'DejaVu Sans','Liberation Sans',sans-serif;color:#3ea5ff;white-space:pre;letter-spacing:-0.080px;-webkit-text-stroke:0.5px;">Events</span>
<div style="position:absolute;left:430px;top:217.2px;width:1579px;height:1.6px;background:#3a3a3a;"></div>
<span style="position:absolute;left:442.00px;top:235.00px;font:400 18.5px/1 'DejaVu Sans','Liberation Sans',sans-serif;color:#fff;white-space:pre;letter-spacing:1.128px;-webkit-text-stroke:0.5px;">Hostname</span>
<span style="position:absolute;left:836.00px;top:235.00px;font:400 18.5px/1 'DejaVu Sans','Liberation Sans',sans-serif;color:#fff;white-space:pre;letter-spacing:1.109px;-webkit-text-stroke:0.5px;">k3d-portainer-agent-0</span>
<div style="position:absolute;left:430px;top:270.56px;width:1579px;height:1.6px;background:#3a3a3a;"></div>
<span style="position:absolute;left:442.00px;top:289.00px;font:400 18.5px/1 'DejaVu Sans','Liberation Sans',sans-serif;color:#fff;white-space:pre;letter-spacing:1.573px;-webkit-text-stroke:0.5px;">Role</span>
<span style="position:absolute;left:837.00px;top:289.00px;font:400 18.5px/1 'DejaVu Sans','Liberation Sans',sans-serif;color:#fff;white-space:pre;letter-spacing:1.086px;-webkit-text-stroke:0.5px;">Worker</span>
<div style="position:absolute;left:430px;top:323.91999999999996px;width:1579px;height:1.6px;background:#3a3a3a;"></div>
<span style="position:absolute;left:442.00px;top:342.00px;font:400 18.5px/1 'DejaVu Sans','Liberation Sans',sans-serif;color:#fff;white-space:pre;letter-spacing:0.746px;-webkit-text-stroke:0.5px;">Kubelet version</span>
<span style="position:absolute;left:837.00px;top:341.00px;font:400 19.5px/1 'Liberation Sans',sans-serif;color:#fff;white-space:pre;letter-spacing:-0.173px;">v1.22.7+k3s1</span>
<div style="position:absolute;left:430px;top:377.28px;width:1579px;height:1.6px;background:#3a3a3a;"></div>
<span style="position:absolute;left:442.00px;top:396.00px;font:400 18.5px/1 'DejaVu Sans','Liberation Sans',sans-serif;color:#fff;white-space:pre;letter-spacing:0.751px;-webkit-text-stroke:0.5px;">Creation date</span>
<span style="position:absolute;left:836.00px;top:396.00px;font:400 18.5px/1 'DejaVu Sans','Liberation Sans',sans-serif;color:#fff;white-space:pre;letter-spacing:0.499px;-webkit-text-stroke:0.5px;">2022-04-29 22:04:08</span>
<div style="position:absolute;left:430px;top:430.64px;width:1579px;height:1.6px;background:#3a3a3a;"></div>
<span style="position:absolute;left:442.00px;top:449.00px;font:400 18.5px/1 'DejaVu Sans','Liberation Sans',sans-serif;color:#fff;white-space:pre;letter-spacing:0.798px;-webkit-text-stroke:0.5px;">Status</span>
<div style="position:absolute;left:430px;top:484.0px;width:1579px;height:1.6px;background:#3a3a3a;"></div>
<span style="position:absolute;left:443.00px;top:502.00px;font:400 18.5px/1 'DejaVu Sans','Liberation Sans',sans-serif;color:#fff;white-space:pre;letter-spacing:0.428px;-webkit-text-stroke:0.5px;">Availability</span>
<div style="position:absolute;left:837px;top:442px;width:85.2px;height:33px;background:#5cb85c;border-radius:4.5px;"></div>
<span style="position:absolute;left:847.80px;top:449.01px;font:700 19.5px/1 'Liberation Sans','DejaVu Sans',sans-serif;color:#fff;white-space:pre;letter-spacing:1.129px;">Ready</span>
<div style="position:absolute;left:837px;top:497px;width:240px;height:51px;background:#181818;border-radius:6px;box-sizing:border-box;border:1.5px solid #353535;"></div>
<span style="position:absolute;left:862.30px;top:513.00px;font:400 20.5px/1 'Liberation Sans',sans-serif;color:#fff;white-space:pre;letter-spacing:-0.445px;">Active</span>
<svg style="position:absolute;left:1050px;top:510px" width="26" height="24" viewBox="0 0 26 24"><path d="M6.8 9.2 L13 15.4 L19.2 9.2" fill="none" stroke="#fff" stroke-width="2.2"/></svg>
<span style="position:absolute;left:442.10px;top:615.01px;font:400 20px/1 'DejaVu Sans','Liberation Sans',sans-serif;color:#a9a9a9;white-space:pre;letter-spacing:0.719px;-webkit-text-stroke:0.5px;">Resource reservation</span>
<div style="position:absolute;left:442px;top:640px;width:1555px;height:1.2px;background:#9c9c9c;"></div>
<span style="position:absolute;left:442.00px;top:669.01px;font:400 16.5px/1 'DejaVu Sans','Liberation Sans',sans-serif;color:#ababab;white-space:pre;letter-spacing:0.717px;-webkit-text-stroke:0.5px;">Resource reservation represents the total amount of resource assigned to all the applications running on this node.</span>
<span style="position:absolute;left:441.40px;top:741.00px;font:700 20.5px/1 'Liberation Sans','DejaVu Sans',sans-serif;color:#fff;white-space:pre;letter-spacing:-0.071px;">Memory reservation</span>
<div style="position:absolute;left:708.8px;top:733px;width:1155.2px;height:30px;background:#383838;border-radius:6px;"></div>
<div style="position:absolute;left:708.8px;top:733px;width:11.3px;height:30px;background:#5cb85c;border-radius:6px 0 0 6px;"></div>
<span style="position:absolute;left:710.00px;top:739.01px;font:700 19px/1 'Liberation Sans','DejaVu Sans',sans-serif;color:#fff;white-space:pre;letter-spacing:0.068px;text-shadow:1px 1px 1px rgba(0,0,0,.35);">70 / 8337 MB - 1%</span>
<span style="position:absolute;left:442.40px;top:830.01px;font:700 20.5px/1 'Liberation Sans','DejaVu Sans',sans-serif;color:#fff;white-space:pre;letter-spacing:-0.420px;">CPU reservation</span>
<div style="position:absolute;left:708.8px;top:821px;width:1155.2px;height:30px;background:#383838;border-radius:6px;"></div>
<div style="position:absolute;left:708.8px;top:821px;width:34.3px;height:30px;background:#5cb85c;border-radius:6px 0 0 6px;"></div>
<span style="position:absolute;left:710.00px;top:826.00px;font:700 19px/1 'Liberation Sans','DejaVu Sans',sans-serif;color:#fff;white-space:pre;letter-spacing:-0.061px;text-shadow:1px 1px 1px rgba(0,0,0,.35);">0.1 / 4 - 3%</span>
<span style="position:absolute;left:442.00px;top:940.00px;font:400 20px/1 'DejaVu Sans','Liberation Sans',sans-serif;color:#a9a9a9;white-space:pre;letter-spacing:0.669px;-webkit-text-stroke:0.5px;">Labels</span>
<div style="position:absolute;left:442px;top:966px;width:1555px;height:1.2px;background:#9c9c9c;"></div>
<div style="position:absolute;left:442px;top:993px;width:112px;height:27px;background:#777;border-radius:4px;"></div>
<svg style="position:absolute;left:451.15px;top:996.85px;" width="16.30" height="16.30" viewBox="0 0 512 512" fill="#fff"><path d="M256 8C119 8 8 119 8 256s111 248 248 248 248-111 248-248S393 8 256 8zm144 276c0 6.600-5.400 12-12 12h-92v92c0 6.600-5.400 12-12 12h-56c-6.600 0-12-5.400-12-12v-92h-92c-6.600 0-12-5.400-12-12v-56c0-6.600 5.400-12 12-12h92v-92c0-6.600 5.400-12 12-12h56c6.600 0 12 5.400 12 12v92h92c6.600 0 12 5.400 12 12v56z"/></svg>
<span style="position:absolute;left:471.20px;top:997.00px;font:700 17.5px/1 'Liberation Sans','DejaVu Sans',sans-serif;color:#fff;white-space:pre;letter-spacing:-0.224px;">add label</span>
<div style="position:absolute;left:442px;top:1039.1px;width:82.2px;height:44.6px;background:#363636;border-radius:5px 0 0 5px;"></div>
<div style="position:absolute;left:524px;top:1039.1px;width:307px;height:44.6px;background:#383838;border-radius:0 5px 5px 0;"></div>
<span style="position:absolute;left:466.60px;top:1053.01px;font:400 17.3px/1 'DejaVu Sans','Liberation Sans',sans-serif;color:#adadad;white-space:pre;letter-spacing:1.398px;-webkit-text-stroke:0.5px;">Key</span>
<div style="position:absolute;left:837.2px;top:1039.1px;width:97.3px;height:44.6px;background:#363636;border-radius:5px 0 0 5px;"></div>
<div style="position:absolute;left:934.4px;top:1039.1px;width:290.3px;height:44.6px;background:#383838;border-radius:0 5px 5px 0;"></div>
<span style="position:absolute;left:861.30px;top:1053.01px;font:400 17.3px/1 'DejaVu Sans','Liberation Sans',sans-serif;color:#adadad;white-space:pre;letter-spacing:0.619px;-webkit-text-stroke:0.5px;">Value</span>
<span style="position:absolute;left:540.30px;top:1053.00px;font:400 17.2px/1 'DejaVu Sans','Liberation Sans',sans-serif;color:#fff;white-space:pre;letter-spacing:0.753px;-webkit-text-stroke:0.5px;">beta.kubernetes.io/arch</span>
<span style="position:absolute;left:949.10px;top:1053.00px;font:400 17.2px/1 'DejaVu Sans','Liberation Sans',sans-serif;color:#fff;white-space:pre;letter-spacing:0.995px;-webkit-text-stroke:0.5px;">amd64</span>
<div style="position:absolute;left:1238.9px;top:1050.1999999999998px;width:76.1px;height:26.5px;background:#5bc0de;border-radius:4px;"></div>
<span style="position:absolute;left:1247.90px;top:1054.00px;font:700 17.5px/1 'Liberation Sans','DejaVu Sans',sans-serif;color:#fff;white-space:pre;letter-spacing:-0.412px;">system</span>
<div style="position:absolute;left:442px;top:1093.1299999999999px;width:82.2px;height:44.6px;background:#363636;border-radius:5px 0 0 5px;"></div>
<div style="position:absolute;left:524px;top:1093.1299999999999px;width:307px;height:44.6px;background:#383838;border-radius:0 5px 5px 0;"></div>
<span style="position:absolute;left:466.60px;top:1107.01px;font:400 17.3px/1 'DejaVu Sans','Liberation Sans',sans-serif;color:#adadad;white-space:pre;letter-spacing:1.398px;-webkit-text-stroke:0.5px;">Key</span>
<div style="position:absolute;left:837.2px;top:1093.1299999999999px;width:97.3px;height:44.6px;background:#363636;border-radius:5px 0 0 5px;"></div>
<div style="position:absolute;left:934.4px;top:1093.1299999999999px;width:290.3px;height:44.6px;background:#383838;border-radius:0 5px 5px 0;"></div>
<span style="position:absolute;left:861.30px;top:1107.01px;font:400 17.3px/1 'DejaVu Sans','Liberation Sans',sans-serif;color:#adadad;white-space:pre;letter-spacing:0.619px;-webkit-text-stroke:0.5px;">Value</span>
<div style="position:absolute;left:530px;top:1093.13px;width:284.6px;height:44.6px;overflow:hidden">
<span style="position:absolute;left:10.30px;top:13.88px;font:400 17.2px/1 'DejaVu Sans','Liberation Sans',sans-serif;color:#fff;white-space:pre;letter-spacing:0.747px;-webkit-text-stroke:0.5px;">beta.kubernetes.io/instance-type</span>
</div>
<span style="position:absolute;left:949.10px;top:1107.01px;font:400 17.2px/1 'DejaVu Sans','Liberation Sans',sans-serif;color:#fff;white-space:pre;letter-spacing:0.356px;-webkit-text-stroke:0.5px;">k3s</span>
<div style="position:absolute;left:1238.9px;top:1104.2299999999998px;width:76.1px;height:26.5px;background:#5bc0de;border-radius:4px;"></div>
<span style="position:absolute;left:1247.90px;top:1108.00px;font:700 17.5px/1 'Liberation Sans','DejaVu Sans',sans-serif;color:#fff;white-space:pre;letter-spacing:-0.412px;">system</span>
<div style="position:absolute;left:442px;top:1147.1599999999999px;width:82.2px;height:44.6px;background:#363636;border-radius:5px 0 0 5px;"></div>
<div style="position:absolute;left:524px;top:1147.1599999999999px;width:307px;height:44.6px;background:#383838;border-radius:0 5px 5px 0;"></div>
<span style="position:absolute;left:466.60px;top:1161.01px;font:400 17.3px/1 'DejaVu Sans','Liberation Sans',sans-serif;color:#adadad;white-space:pre;letter-spacing:1.398px;-webkit-text-stroke:0.5px;">Key</span>
<div style="position:absolute;left:837.2px;top:1147.1599999999999px;width:97.3px;height:44.6px;background:#363636;border-radius:5px 0 0 5px;"></div>
<div style="position:absolute;left:934.4px;top:1147.1599999999999px;width:290.3px;height:44.6px;background:#383838;border-radius:0 5px 5px 0;"></div>
<span style="position:absolute;left:861.30px;top:1161.01px;font:400 17.3px/1 'DejaVu Sans','Liberation Sans',sans-serif;color:#adadad;white-space:pre;letter-spacing:0.619px;-webkit-text-stroke:0.5px;">Value</span>
<span style="position:absolute;left:540.30px;top:1161.01px;font:400 17.2px/1 'DejaVu Sans','Liberation Sans',sans-serif;color:#fff;white-space:pre;letter-spacing:0.731px;-webkit-text-stroke:0.5px;">beta.kubernetes.io/os</span>
<span style="position:absolute;left:949.10px;top:1161.01px;font:400 17.2px/1 'DejaVu Sans','Liberation Sans',sans-serif;color:#fff;white-space:pre;letter-spacing:0.666px;-webkit-text-stroke:0.5px;">linux</span>
<div style="position:absolute;left:1238.9px;top:1158.2599999999998px;width:76.1px;height:26.5px;background:#5bc0de;border-radius:4px;"></div>
<span style="position:absolute;left:1247.90px;top:1162.00px;font:700 17.5px/1 'Liberation Sans','DejaVu Sans',sans-serif;color:#fff;white-space:pre;letter-spacing:-0.412px;">system</span>
<div style="position:absolute;left:442px;top:1201.1899999999998px;width:82.2px;height:44.6px;background:#363636;border-radius:5px 0 0 5px;"></div>
<div style="position:absolute;left:524px;top:1201.1899999999998px;width:307px;height:44.6px;background:#383838;border-radius:0 5px 5px 0;"></div>
<span style="position:absolute;left:466.60px;top:1215.01px;font:400 17.3px/1 'DejaVu Sans','Liberation Sans',sans-serif;color:#adadad;white-space:pre;letter-spacing:1.398px;-webkit-text-stroke:0.5px;">Key</span>
<div style="position:absolute;left:837.2px;top:1201.1899999999998px;width:97.3px;height:44.6px;background:#363636;border-radius:5px 0 0 5px;"></div>
<div style="position:absolute;left:934.4px;top:1201.1899999999998px;width:290.3px;height:44.6px;background:#383838;border-radius:0 5px 5px 0;"></div>
<span style="position:absolute;left:861.30px;top:1215.01px;font:400 17.3px/1 'DejaVu Sans','Liberation Sans',sans-serif;color:#adadad;white-space:pre;letter-spacing:0.619px;-webkit-text-stroke:0.5px;">Value</span>
<span style="position:absolute;left:540.30px;top:1215.01px;font:400 17.2px/1 'DejaVu Sans','Liberation Sans',sans-serif;color:#fff;white-space:pre;letter-spacing:0.817px;-webkit-text-stroke:0.5px;">kubernetes.io/arch</span>
<span style="position:absolute;left:949.10px;top:1215.01px;font:400 17.2px/1 'DejaVu Sans','Liberation Sans',sans-serif;color:#fff;white-space:pre;letter-spacing:0.995px;-webkit-text-stroke:0.5px;">amd64</span>
<div style="position:absolute;left:1238.9px;top:1212.2899999999997px;width:76.1px;height:26.5px;background:#5bc0de;border-radius:4px;"></div>
<span style="position:absolute;left:1247.90px;top:1216.01px;font:700 17.5px/1 'Liberation Sans','DejaVu Sans',sans-serif;color:#fff;white-space:pre;letter-spacing:-0.412px;">system</span>
<div style="position:absolute;left:442px;top:1255.2199999999998px;width:82.2px;height:44.6px;background:#363636;border-radius:5px 0 0 5px;"></div>
<div style="position:absolute;left:524px;top:1255.2199999999998px;width:307px;height:44.6px;background:#383838;border-radius:0 5px 5px 0;"></div>
<span style="position:absolute;left:466.60px;top:1269.01px;font:400 17.3px/1 'DejaVu Sans','Liberation Sans',sans-serif;color:#adadad;white-space:pre;letter-spacing:1.398px;-webkit-text-stroke:0.5px;">Key</span>
<div style="position:absolute;left:837.2px;top:1255.2199999999998px;width:97.3px;height:44.6px;background:#363636;border-radius:5px 0 0 5px;"></div>
<div style="position:absolute;left:934.4px;top:1255.2199999999998px;width:290.3px;height:44.6px;background:#383838;border-radius:0 5px 5px 0;"></div>
<span style="position:absolute;left:861.30px;top:1269.01px;font:400 17.3px/1 'DejaVu Sans','Liberation Sans',sans-serif;color:#adadad;white-space:pre;letter-spacing:0.619px;-webkit-text-stroke:0.5px;">Value</span>
<span style="position:absolute;left:540.30px;top:1269.01px;font:400 17.2px/1 'DejaVu Sans','Liberation Sans',sans-serif;color:#fff;white-space:pre;letter-spacing:0.871px;-webkit-text-stroke:0.5px;">kubernetes.io/hostname</span>
<span style="position:absolute;left:949.10px;top:1269.01px;font:400 17.2px/1 'DejaVu Sans','Liberation Sans',sans-serif;color:#fff;white-space:pre;letter-spacing:0.959px;-webkit-text-stroke:0.5px;">k3d-portainer-agent-0</span>
<div style="position:absolute;left:1238.9px;top:1266.3199999999997px;width:76.1px;height:26.5px;background:#5bc0de;border-radius:4px;"></div>
<span style="position:absolute;left:1247.90px;top:1270.01px;font:700 17.5px/1 'Liberation Sans','DejaVu Sans',sans-serif;color:#fff;white-space:pre;letter-spacing:-0.412px;">system</span>
<div style="position:absolute;left:442px;top:1309.25px;width:82.2px;height:44.6px;background:#363636;border-radius:5px 0 0 5px;"></div>
<div style="position:absolute;left:524px;top:1309.25px;width:307px;height:44.6px;background:#383838;border-radius:0 5px 5px 0;"></div>
<span style="position:absolute;left:466.60px;top:1323.01px;font:400 17.3px/1 'DejaVu Sans','Liberation Sans',sans-serif;color:#adadad;white-space:pre;letter-spacing:1.398px;-webkit-text-stroke:0.5px;">Key</span>
<div style="position:absolute;left:837.2px;top:1309.25px;width:97.3px;height:44.6px;background:#363636;border-radius:5px 0 0 5px;"></div>
<div style="position:absolute;left:934.4px;top:1309.25px;width:290.3px;height:44.6px;background:#383838;border-radius:0 5px 5px 0;"></div>
<span style="position:absolute;left:861.30px;top:1323.01px;font:400 17.3px/1 'DejaVu Sans','Liberation Sans',sans-serif;color:#adadad;white-space:pre;letter-spacing:0.619px;-webkit-text-stroke:0.5px;">Value</span>
<span style="position:absolute;left:540.30px;top:1323.01px;font:400 17.2px/1 'DejaVu Sans','Liberation Sans',sans-serif;color:#fff;white-space:pre;letter-spacing:0.836px;-webkit-text-stroke:0.5px;">kubernetes.io/os</span>
<span style="position:absolute;left:949.10px;top:1323.01px;font:400 17.2px/1 'DejaVu Sans','Liberation Sans',sans-serif;color:#fff;white-space:pre;letter-spacing:0.666px;-webkit-text-stroke:0.5px;">linux</span>
<div style="position:absolute;left:1238.9px;top:1320.35px;width:76.1px;height:26.5px;background:#5bc0de;border-radius:4px;"></div>
<span style="position:absolute;left:1247.90px;top:1324.01px;font:700 17.5px/1 'Liberation Sans','DejaVu Sans',sans-serif;color:#fff;white-space:pre;letter-spacing:-0.412px;">system</span>
<div style="position:absolute;left:442px;top:1363.28px;width:82.2px;height:44.6px;background:#363636;border-radius:5px 0 0 5px;"></div>
<div style="position:absolute;left:524px;top:1363.28px;width:307px;height:44.6px;background:#181818;border-radius:0 5px 5px 0;box-sizing:border-box;border:1.5px solid #343434;"></div>
<span style="position:absolute;left:466.60px;top:1377.00px;font:400 17.3px/1 'DejaVu Sans','Liberation Sans',sans-serif;color:#adadad;white-space:pre;letter-spacing:1.398px;-webkit-text-stroke:0.5px;">Key</span>
<div style="position:absolute;left:837.2px;top:1363.28px;width:97.3px;height:44.6px;background:#363636;border-radius:5px 0 0 5px;"></div>
<div style="position:absolute;left:934.4px;top:1363.28px;width:290.3px;height:44.6px;background:#181818;border-radius:0 5px 5px 0;box-sizing:border-box;border:1.5px solid #343434;"></div>
<span style="position:absolute;left:861.30px;top:1377.00px;font:400 17.3px/1 'DejaVu Sans','Liberation Sans',sans-serif;color:#adadad;white-space:pre;letter-spacing:0.619px;-webkit-text-stroke:0.5px;">Value</span>
<div style="position:absolute;left:530px;top:1363.28px;width:283.6px;height:44.6px;overflow:hidden">
<span style="position:absolute;left:10.30px;top:13.74px;font:400 17.2px/1 'DejaVu Sans','Liberation Sans',sans-serif;color:#fff;white-space:pre;letter-spacing:0.747px;-webkit-text-stroke:0.5px;">node.kubernetes.io/instance-type</span>
</div>
<span style="position:absolute;left:949.10px;top:1377.01px;font:400 17.2px/1 'DejaVu Sans','Liberation Sans',sans-serif;color:#fff;white-space:pre;letter-spacing:0.356px;-webkit-text-stroke:0.5px;">k3s</span>
<div style="position:absolute;left:1238.9px;top:1362.8799999999999px;width:45.2px;height:45.4px;background:#d9534f;border-radius:4.5px;"></div>
<svg style="position:absolute;left:1254.70px;top:1375.03px;" width="13.41" height="19.50" viewBox="0 0 352 512" fill="#fff"><path d="M242.72 256l100.07-100.07c12.28-12.28 12.28-32.19 0-44.48l-22.24-22.24c-12.28-12.28-32.19-12.28-44.48 0L176 189.28 75.93 89.21c-12.28-12.28-32.19-12.28-44.48 0L9.21 111.45c-12.28 12.28-12.28 32.19 0 44.48L109.28 256 9.21 356.07c-12.28 12.28-12.28 32.19 0 44.48l22.24 22.24c12.28 12.28 32.2 12.28 44.48 0L176 322.72l100.07 100.07c12.28 12.28 32.2 12.28 44.48 0l22.24-22.24c12.28-12.28 12.28-32.19 0-44.48L242.72 256z"/></svg>
<svg style="position:absolute;left:1505px;top:488px" width="32" height="40" viewBox="1505 488 32 40"><path d="M1512.9 495.4 L1512.9 517.1 L1517.5 513.2 L1520.9 520 L1525 519 L1522.3 512.3 L1529.2 511.9 Z" fill="#fff" stroke="#000" stroke-width="1.3" stroke-linejoin="round"/></svg>
<div style="position:absolute;left:2062px;top:1px;width:1px;height:1437px;background:#0e0e0e;"></div>
<div style="position:absolute;left:2063px;top:1px;width:24px;height:1437px;background:#f1f1f1;"></div>
<div style="position:absolute;left:2063px;top:1px;width:1.6px;height:1437px;background:#fff;"></div>
<div style="position:absolute;left:2065px;top:26px;width:21px;height:867px;background:#c1c1c1;"></div>
<svg style="position:absolute;left:2063px;top:0" width="24" height="1438" viewBox="2063 0 24 1438"><path d="M2069.7 17 L2081.3 17 L2075.5 10.8 Z" fill="#a3a3a3"/><path d="M2069.7 1424 L2081.3 1424 L2075.5 1430.2 Z" fill="#505050"/></svg>
<div style="position:absolute;left:0px;top:0px;width:2087px;height:1px;background:#737373;"></div>
<div style="position:absolute;left:0px;top:0px;width:1px;height:1438px;background:#6b6b6b;"></div>
</body></html>
